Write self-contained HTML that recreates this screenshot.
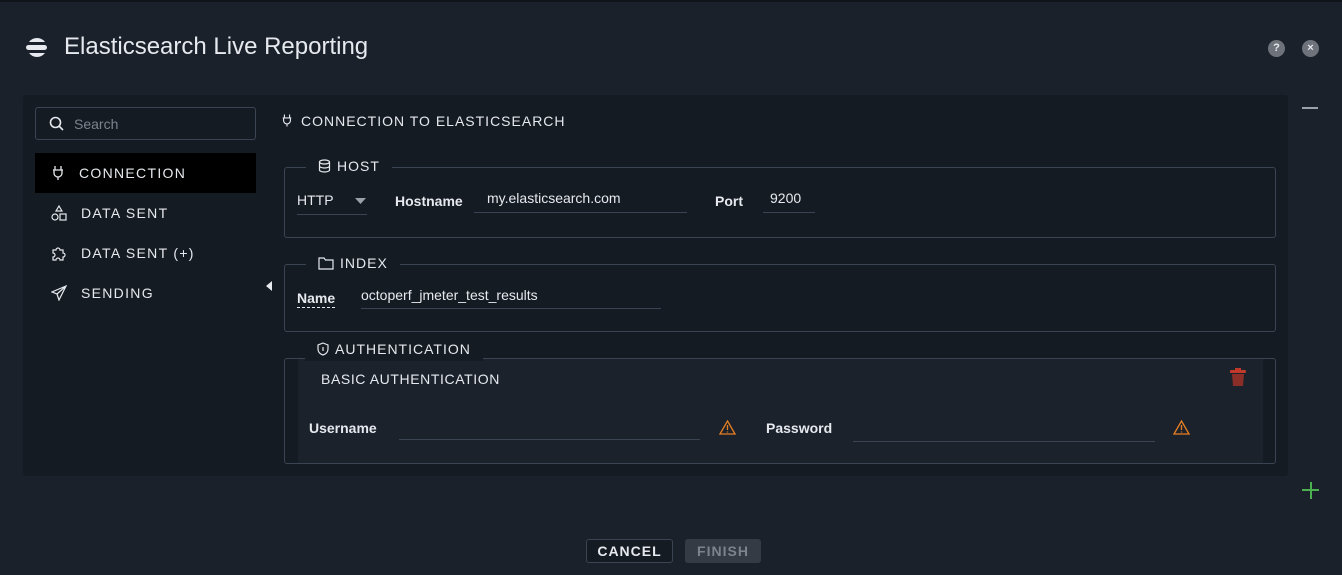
<!DOCTYPE html>
<html><head><style>
*{box-sizing:border-box;margin:0;padding:0}
body{width:1342px;height:575px;background:#1b212b;font-family:"Liberation Sans",sans-serif;color:#e6e9ee;position:relative;overflow:hidden}
.a{position:absolute}
.panel{left:23px;top:95px;width:1265px;height:381px;background:#151b23;border-radius:3px}
.fs{position:absolute;border:1px solid #3a4452;border-radius:3px}
.leg{position:absolute;background:#151b23;padding:0 12px;font-size:14px;letter-spacing:1px;color:#e6e9ee;display:flex;align-items:center;gap:6px}
.nav{position:absolute;left:35px;width:221px;height:40px;display:flex;align-items:center;font-size:14px;letter-spacing:1.3px;color:#e6e9ee}
.nav svg{margin:0 14px 0 16px}
.lbl{font-size:14px;font-weight:bold;color:#e6e9ee}
.ul{border-bottom:1px solid #3a4452}
.t{font-size:14px}
</style></head><body>
<div class="a" style="left:0;top:0;width:1342px;height:2px;background:#0f141b"></div>
<svg class="a" style="left:26px;top:36px" width="22" height="24" viewBox="0 0 22 24"><path d="M3 6A10 10 0 0 1 19 6Z" fill="#e6e9ee"/><rect x="0" y="9" width="21" height="5" rx="2.5" fill="#e6e9ee"/><path d="M3 17A10 10 0 0 0 19 17Z" fill="#e6e9ee"/></svg>
<div class="a" style="left:64px;top:33px;font-size:24px;color:#e6e9ee">Elasticsearch Live Reporting</div>
<div class="a" style="left:1268px;top:40px;width:17px;height:17px;border-radius:50%;background:#6e737b;color:#e6e9ee;font-size:11px;font-weight:bold;text-align:center;line-height:17px">?</div>
<div class="a" style="left:1302px;top:40px;width:17px;height:17px;border-radius:50%;background:#6e737b;color:#e6e9ee;font-size:11px;font-weight:bold;text-align:center;line-height:17px">×</div>
<div class="a" style="left:1302px;top:107px;width:16px;height:2px;background:#9aa1ab"></div>
<div class="a" style="left:1302px;top:489px;width:17px;height:2px;background:#4caf50"></div>
<div class="a" style="left:1309.5px;top:482px;width:2px;height:17px;background:#4caf50"></div>

<div class="a panel"></div>
<div class="a" style="left:35px;top:107px;width:221px;height:33px;border:1px solid #3a4452;border-radius:3px"></div>
<svg class="a" style="left:49px;top:116px" width="16" height="16" viewBox="0 0 16 16"><circle cx="6.5" cy="6.5" r="5" stroke="#e6e9ee" stroke-width="1.6" fill="none"/><path d="M10 10l4 4" stroke="#e6e9ee" stroke-width="1.6"/></svg>
<div class="a t" style="left:74px;top:116px;color:#7d838c">Search</div>

<div class="nav" style="top:153px;background:#000"><svg width="14" height="16" viewBox="0 0 14 16" fill="none" stroke="#e6e9ee" stroke-width="1.3"><path d="M4 1v4M10 1v4M2 5h10M3 5v3a4 4 0 008 0V5M7 12v3"/></svg>CONNECTION</div>
<div class="nav" style="top:193px"><svg width="16" height="16" viewBox="0 0 16 16" fill="none" stroke="#e6e9ee" stroke-width="1.2"><path d="M8 1l3 5H5z"/><circle cx="4" cy="12" r="3"/><rect x="9" y="9" width="6" height="6"/></svg>DATA SENT</div>
<div class="nav" style="top:233px"><svg width="16" height="16" viewBox="0 0 16 16" fill="none" stroke="#e6e9ee" stroke-width="1.2"><path d="M2 5h3a2 2 0 114 0h3v3a2 2 0 110 4v3H9a2 2 0 10-4 0H2v-3a2 2 0 100-4z"/></svg>DATA SENT (+)</div>
<div class="nav" style="top:273px"><svg width="16" height="16" viewBox="0 0 16 16" fill="none" stroke="#e6e9ee" stroke-width="1.2"><path d="M15 1L1 7l5 2 2 6zM6 9l9-8"/></svg>SENDING</div>
<svg class="a" style="left:266px;top:281px" width="6" height="10"><path d="M6 0v10L0 5z" fill="#e6e9ee"/></svg>

<svg class="a" style="left:281px;top:113px" width="12" height="15" viewBox="0 0 14 16" fill="none" stroke="#e6e9ee" stroke-width="1.3"><path d="M4 1v4M10 1v4M2 5h10M3 5v3a4 4 0 008 0V5M7 12v3"/></svg>
<div class="a t" style="left:301px;top:113px;letter-spacing:1px">CONNECTION TO ELASTICSEARCH</div>

<div class="fs" style="left:284px;top:167px;width:992px;height:71px"></div>
<div class="leg" style="left:306px;top:156px;height:20px"><svg width="13" height="14" viewBox="0 0 13 14" fill="none" stroke="#e6e9ee" stroke-width="1.2"><ellipse cx="6.5" cy="3" rx="5" ry="2"/><path d="M1.5 3v8c0 1 2 2 5 2s5-1 5-2V3M1.5 7c0 1 2 2 5 2s5-1 5-2"/></svg>HOST</div>
<div class="a t" style="left:297px;top:192px">HTTP</div>
<svg class="a" style="left:355px;top:198px" width="11" height="6"><path d="M0 0h11L5.5 6z" fill="#9aa1ab"/></svg>
<div class="a ul" style="left:297px;top:214px;width:70px"></div>
<div class="a lbl" style="left:395px;top:193px">Hostname</div>
<div class="a t" style="left:487px;top:190px">my.elasticsearch.com</div>
<div class="a ul" style="left:474px;top:212px;width:213px"></div>
<div class="a lbl" style="left:715px;top:193px">Port</div>
<div class="a t" style="left:770px;top:190px">9200</div>
<div class="a ul" style="left:763px;top:212px;width:52px"></div>

<div class="fs" style="left:284px;top:264px;width:992px;height:68px"></div>
<div class="leg" style="left:306px;top:253px;height:20px"><svg width="16" height="13" viewBox="0 0 16 13" fill="none" stroke="#e6e9ee" stroke-width="1.2"><path d="M1 1h5l1.5 2H15v9H1z"/></svg>INDEX</div>
<div class="a lbl" style="left:297px;top:290px;border-bottom:1px dashed #e6e9ee;line-height:17px">Name</div>
<div class="a t" style="left:361px;top:287px">octoperf_jmeter_test_results</div>
<div class="a ul" style="left:361px;top:308px;width:300px"></div>

<div class="fs" style="left:284px;top:358px;width:992px;height:106px"></div>
<div class="a" style="left:298px;top:359px;width:965px;height:104px;background:#1b222c"></div>
<div class="leg" style="left:305px;top:337px;height:24px"><svg width="12" height="14" viewBox="0 0 12 14" fill="none" stroke="#e6e9ee" stroke-width="1.2"><path d="M6 1l5 2v4c0 3-2 5-5 6-3-1-5-3-5-6V3z"/><path d="M6 5v4"/></svg>AUTHENTICATION</div>
<div class="a t" style="left:321px;top:371px;letter-spacing:.6px">BASIC AUTHENTICATION</div>
<svg class="a" style="left:1229px;top:367px" width="18" height="20" viewBox="0 0 18 20"><rect x="6" y="1" width="6" height="2" fill="#c0392b"/><rect x="1" y="3" width="16" height="3" rx="1" fill="#c0392b"/><path d="M3 7h12l-1 12H4z" fill="#8a2e27"/></svg>
<div class="a lbl" style="left:309px;top:420px">Username</div>
<div class="a ul" style="left:399px;top:439px;width:301px"></div>
<svg class="a" style="left:719px;top:420px" width="17" height="15" viewBox="0 0 17 15" fill="none" stroke="#e67e22" stroke-width="1.3"><path d="M8.5 1L16 14H1z"/><path d="M8.5 5v5M8.5 11.5v1"/></svg>
<div class="a lbl" style="left:766px;top:420px">Password</div>
<div class="a ul" style="left:853px;top:441px;width:302px"></div>
<svg class="a" style="left:1173px;top:420px" width="17" height="15" viewBox="0 0 17 15" fill="none" stroke="#e67e22" stroke-width="1.3"><path d="M8.5 1L16 14H1z"/><path d="M8.5 5v5M8.5 11.5v1"/></svg>

<div class="a" style="left:586px;top:539px;width:87px;height:24px;border:1px solid #3a4452;border-radius:3px;background:#151b23;font-size:14px;font-weight:bold;letter-spacing:1px;text-align:center;line-height:22px">CANCEL</div>
<div class="a" style="left:685px;top:539px;width:76px;height:24px;border-radius:3px;background:#353b45;color:#7d838c;font-size:14px;font-weight:bold;letter-spacing:1px;text-align:center;line-height:24px">FINISH</div>
</body></html>
